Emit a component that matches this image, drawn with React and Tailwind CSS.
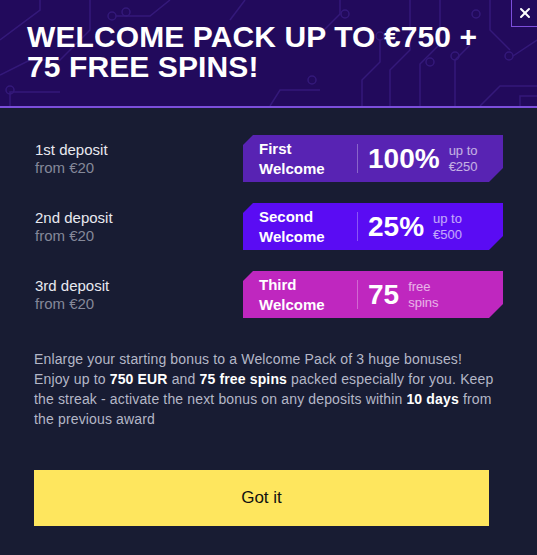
import { X } from 'lucide-react'

const rows = [
  { label: '1st deposit', title: ['First', 'Welcome'], big: '100%', small: ['up to', '€250'], bg: 'bg-[#5823b3]' },
  { label: '2nd deposit', title: ['Second', 'Welcome'], big: '25%', small: ['up to', '€500'], bg: 'bg-[#5a0cf3]' },
  { label: '3rd deposit', title: ['Third', 'Welcome'], big: '75', small: ['free', 'spins'], bg: 'bg-[#bf27bf]' },
]

const Circuit = () => (
  <svg className="absolute inset-0 w-full h-full" viewBox="0 0 537 106" fill="none" stroke="#34197a" strokeWidth="1.5">
    <path d="M0 40 L40 10 L40 0" />
    <path d="M0 75 L30 60 L60 60 L90 30 L90 0" />
    <path d="M10 106 L10 92 L60 92" />
    <circle cx="10" cy="90" r="4" />
    <circle cx="112" cy="16" r="4" />
    <path d="M116 16 L150 16 L170 0" />
    <circle cx="126" cy="12" r="4" />
    <path d="M245 0 L230 20" />
    <path d="M270 106 L280 90 L320 90" />
    <circle cx="312" cy="80" r="4" />
    <path d="M340 0 L340 14 L320 34" />
    <circle cx="345" cy="14" r="4" />
    <path d="M362 106 L362 80 L380 62 L380 40" />
    <circle cx="380" cy="36" r="4" />
    <path d="M390 106 L390 70 L410 50 L410 0" />
    <path d="M420 106 L420 64 L440 44 L440 0" />
    <circle cx="430" cy="62" r="4" />
    <path d="M455 106 L455 60 L470 45" />
    <circle cx="455" cy="56" r="4" />
    <path d="M480 106 L500 86 L537 86" />
    <circle cx="509" cy="56" r="4" />
    <path d="M513 56 L537 40" />
    <path d="M490 0 L490 30 L510 50" />
    <circle cx="476" cy="14" r="4" />
    <path d="M520 106 L520 96 L537 96" />
  </svg>
)

const App = () => {
  return (
    <div className="w-[537px] h-[555px] bg-[#181c33] font-['Liberation_Sans',Arial,sans-serif] overflow-hidden">
      <header className="relative h-[108px] bg-[#220a5c] border-b-2 border-[#7c4edc]">
        <Circuit />
        <h1 className="relative pl-[27px] pt-[22px] text-[30px] leading-[30px] font-bold text-white tracking-[0.1px]">
          WELCOME PACK UP TO €750 +<br />75 FREE SPINS!
        </h1>
        <button className="absolute top-0 right-0 w-[26px] h-[27px] flex items-center justify-center border-l border-b border-[#7c4edc] text-white">
          <X className="w-[16px] h-[16px]" strokeWidth={3} />
        </button>
      </header>

      <div className="px-[34px] pt-[27px]">
        <div className="flex flex-col gap-[21px]">
          {rows.map((row) => (
            <div key={row.label} className="flex items-center justify-between pl-px">
              <div className="text-[15px] leading-[18px]">
                <div className="text-[#e8e9f0]">{row.label}</div>
                <div className="text-[#858899]">from €20</div>
              </div>
              <div className={`${row.bg} w-[260px] h-[47px] flex items-center text-white [clip-path:polygon(10px_0,100%_0,100%_calc(100%-14px),calc(100%-14px)_100%,0_100%,0_10px)]`}>
                <div className="w-[114px] pl-[16px] text-[15px] leading-[20px] font-bold">
                  <div>{row.title[0]}</div>
                  <div>{row.title[1]}</div>
                </div>
                <div className="w-px h-[29px] bg-white/30" />
                <div className="flex items-center pl-[10px] gap-[9px]">
                  <span className="text-[28px] font-bold leading-none">{row.big}</span>
                  <div className="text-[13px] leading-[16px] text-white/65">
                    <div>{row.small[0]}</div>
                    <div>{row.small[1]}</div>
                  </div>
                </div>
              </div>
            </div>
          ))}
        </div>

        <p className="mt-[31px] text-[14px] leading-[20px] text-[#b4b7c7] tracking-[0.15px]">
          Enlarge your starting bonus to a Welcome Pack of 3 huge bonuses!<br />
          Enjoy up to <b className="text-white">750 EUR</b> and <b className="text-white">75 free spins</b> packed especially for you. Keep<br />
          the streak - activate the next bonus on any deposits within <b className="text-white">10 days</b> from<br />
          the previous award
        </p>

        <button className="mt-[41px] w-[455px] h-[56px] bg-[#fee65e] text-[#111] text-[17px]">
          Got it
        </button>
      </div>
    </div>
  )
}

export default App
